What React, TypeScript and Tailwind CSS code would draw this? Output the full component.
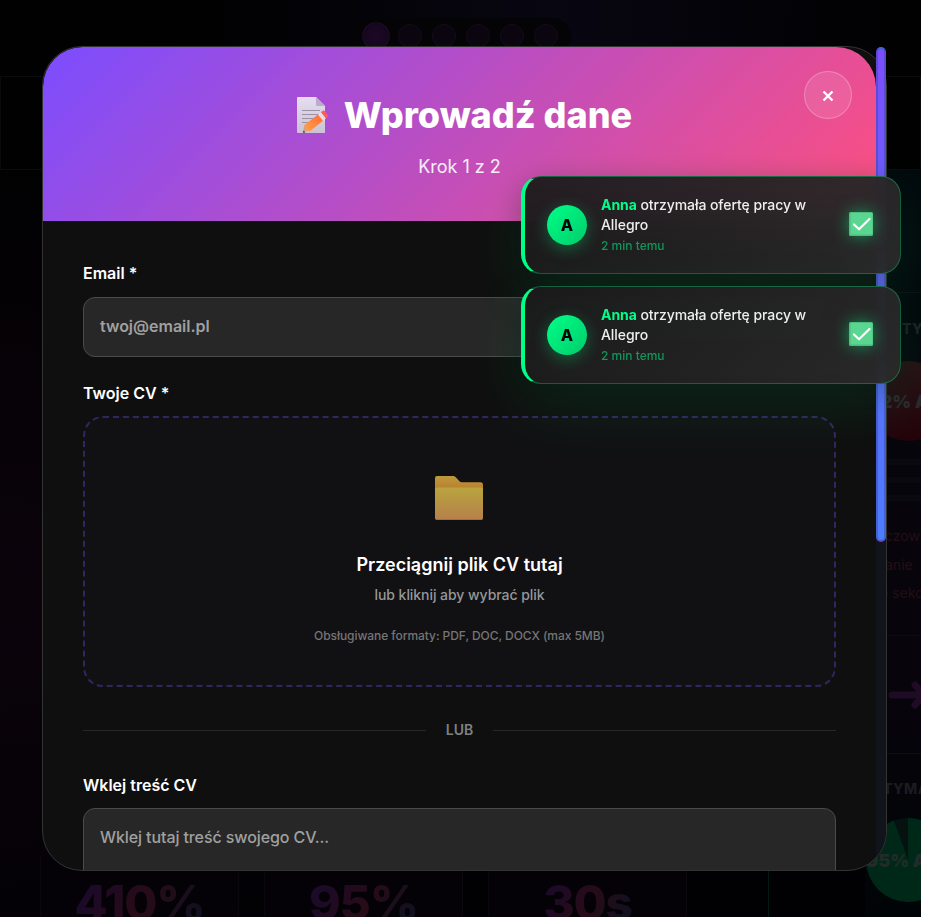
import React from 'react';

const stats = [
  { value: '410%' },
  { value: '95%' },
  { value: '30s' },
];

function MemoIcon() {
  return (
    <svg className="h-[38px] w-[34px] shrink-0" viewBox="0 0 34 38">
      <defs>
        <linearGradient id="paper" x1="0" y1="0" x2="0" y2="1">
          <stop offset="0" stopColor="#e5def0" />
          <stop offset="1" stopColor="#cbc3d5" />
        </linearGradient>
        <linearGradient id="pencil" x1="1" y1="0" x2="0" y2="1">
          <stop offset="0" stopColor="#ff6a36" />
          <stop offset="1" stopColor="#ffa34a" />
        </linearGradient>
      </defs>
      <path d="M2 1h18l9 9v27H2a1 1 0 0 1-1-1V2a1 1 0 0 1 1-1z" fill="url(#paper)" />
      <path d="M20 1l9 9h-8a1 1 0 0 1-1-1z" fill="#b9aeca" />
      <path d="M6 14.5h18M6 18.500h18M6 22.500h18M6 26.500h13" stroke="#9b91a4" strokeWidth="1.200" />
      <path d="M7 36.500l1.500-8 5.500 5.500z" fill="#d9a183" />
      <path d="M7 36.800l.6-2.300 1.700 2.100z" fill="#3c2740" />
      <path d="M8.500 29L22 18.500l5 6.200L13.500 35.500c-1-.2-1.500-.8-1.600-1.900-1.200-.1-1.800-.8-1.900-1.900-1-.3-1.600-1.200-1.500-2.700z" fill="url(#pencil)" />
      <path d="M22 18.500l3-2.300 5 6.200-3 2.300z" fill="#e7dce8" />
      <path d="M25 16.200l1.500-1.200c1-.7 1.700-.6 2.400.3l3 3.700c.6.8.5 1.500-.3 2.100L30 22.400z" fill="#ff5b52" />
    </svg>
  );
}

function FolderIcon() {
  return (
    <svg className="-ml-0.5 h-[46px] w-[50px]" viewBox="0 0 50 46">
      <defs>
        <linearGradient id="folderBack" x1="0" y1="0" x2="0" y2="1">
          <stop offset="0" stopColor="#bd9a3c" />
          <stop offset="0.600" stopColor="#b98231" />
        </linearGradient>
        <linearGradient id="folderFront" x1="0" y1="0" x2="0" y2="1">
          <stop offset="0" stopColor="#b9a43e" />
          <stop offset="1" stopColor="#b6804c" />
        </linearGradient>
      </defs>
      <path d="M3 1h16q1.500 0 2.500 1l4 4.300q.8.900 2 .900h19q2.500 0 2.500 2.500V20H1V3q0-2 2-2z" fill="url(#folderBack)" />
      <path d="M3 12.500h44q2 0 2 2V43q0 2-2 2H3q-2 0-2-2V14.500q0-2 2-2z" fill="url(#folderFront)" />
      <path d="M2 44.500h46" stroke="#b0654c" strokeWidth="1" />
    </svg>
  );
}

function CheckIcon() {
  return (
    <svg className="mb-0.5 h-6 w-6 shrink-0 drop-shadow-[0_0_8px_rgba(0,255,136,0.5)]" viewBox="0 0 24 24">
      <rect width="24" height="24" rx="1.500" fill="#4bbd7c" />
      <rect x="1.500" y="1" width="22" height="21.500" rx="1" fill="#5bd690" />
      <path d="M5 12.500l5 4.800L20.500 7" fill="none" stroke="#fff" strokeWidth="2.200" strokeLinecap="round" strokeLinejoin="round" />
    </svg>
  );
}

function Toast() {
  return (
    <div className="flex h-[98px] items-center rounded-[20px] border border-l-4 border-[rgba(0,255,136,0.3)] border-l-[#00ff88] bg-[linear-gradient(135deg,rgba(26,26,26,0.95),rgba(42,42,42,0.95))] pr-[27px] pl-[22px] shadow-[0_20px_60px_rgba(0,255,136,0.11),0_8px_32px_rgba(0,0,0,0.3)] backdrop-blur-[20px]">
      <div className="flex h-10 w-10 shrink-0 items-center justify-center rounded-full bg-[linear-gradient(135deg,#00ff88,#00cc6a)] text-[16px] font-extrabold text-black shadow-[0_4px_16px_rgba(0,255,136,0.3)]">
        A
      </div>
      <div className="ml-3.5 flex-1">
        <p className="text-[14px] leading-5 font-medium tracking-[-0.06px] text-[#eeeeee]">
          <strong className="font-bold text-[#00ff88]">Anna</strong> otrzymała ofertę pracy w<br />Allegro
        </p>
        <p className="pt-px text-[12px] leading-[19px] font-medium text-[#109759]">2 min temu</p>
      </div>
      <CheckIcon />
    </div>
  );
}

function Backdrop() {
  return (
    <div className="flex h-full flex-col overflow-hidden bg-[radial-gradient(ellipse_at_60%_0%,#080611_0%,transparent_45%),radial-gradient(circle_at_0%_65%,#0b030b_0%,transparent_40%),linear-gradient(#010102,#010104)]">
      <div className="flex h-[76px] shrink-0 justify-center pt-[18px]">
        <div className="flex h-9 items-center gap-2.5 rounded-full bg-[#040407] px-[13px]">
          <span className="h-6 w-6 scale-115 rounded-full border border-[#1d0d24] bg-[radial-gradient(circle,#1c0826,#12061a)]" />
          {[1, 2, 3, 4, 5].map((n) => (
            <span key={n} className="h-6 w-6 rounded-full border border-[#160b1b] bg-[#0b0510]" />
          ))}
        </div>
      </div>
      <div className="h-[94px] shrink-0 border border-[#0b0b0f]" />
      <div className="flex h-[747px] shrink-0 justify-end">
        <div className="flex w-[56px] flex-col overflow-hidden bg-[linear-gradient(#02090c,#07050c_40%,#07040b_70%,#010407)] whitespace-nowrap">
          <div className="h-[123px] shrink-0 border-b border-[#0c1116]" />
          <p className="mt-[26px] ml-[37px] text-[14px] leading-5 font-extrabold tracking-[0.5px] text-[#1c2224]">TYMASZ</p>
          <div className="mt-[22px] ml-[3px] flex h-20 w-20 shrink-0 items-center rounded-full bg-[linear-gradient(#270f13,#24030b)] text-[18px] font-black text-[#29292e]">
            42% A
          </div>
          <div className="mt-[18px] flex flex-col gap-[12px]">
            <div className="h-1.5 bg-[#0b0910]" />
            <div className="h-1.5 bg-[#0b0910]" />
            <div className="h-1.5 bg-[#0b0910]" />
          </div>
          <div className="mt-[21px] h-[114px] shrink-0 border-b border-[#100a12] text-[14px] leading-[28.500px] text-[#260d14]">
            <p className="ml-[20px]">czowych</p>
            <p className="ml-[20px]">anie</p>
            <p className="ml-[15px]">e sekcje</p>
          </div>
          <div className="flex h-[118px] shrink-0 items-center border-b border-[#071118] pl-[20px]">
            <svg className="h-[30px] w-[37px] shrink-0" viewBox="0 0 37 30">
              <path d="M7 15h29M30 5l9 10-9 10" stroke="#200b24" strokeWidth="7" strokeLinecap="round" strokeLinejoin="round" fill="none" />
            </svg>
          </div>
          <p className="mt-[25px] ml-[18px] text-[14px] leading-5 font-extrabold tracking-[0.5px] text-[#1b1b20]">TYMASZ</p>
          <div className="mt-[19px] ml-px flex h-[84px] w-[84px] shrink-0 items-center rounded-full bg-[conic-gradient(#002818_0_94.500%,#06120f_94.500%)] text-[18px] font-black text-[#202c29]">
            95% A
          </div>
        </div>
      </div>
      <div className="-mt-[61px] flex h-[62px] shrink-0 gap-[25px] pl-10">
        {stats.map((stat) => (
          <div key={stat.value} className="flex w-[199px] justify-center border-x border-[#0a080c] bg-[#040206]">
            <span className="mt-[17px] h-12 bg-[linear-gradient(120deg,#1b0a28_15%,#280b17_55%,#12101f_90%)] bg-clip-text text-[48px] leading-[60px] font-extrabold tracking-[-1.200px] text-transparent">
              {stat.value}
            </span>
          </div>
        ))}
        <div className="ml-[56px] w-px bg-[#001b14]" />
      </div>
    </div>
  );
}

function Modal() {
  return (
    <div className="flex h-[825px] w-[845px] overflow-hidden rounded-[40px] border border-[#333333] bg-[#0f0f0f]">
      <div className="w-[833px] shrink-0">
        <header className="relative flex h-[174px] flex-col items-center rounded-t-[40px] bg-[linear-gradient(135deg,#7c4dff,#ff4f7e)] pt-[40px]">
          <h1 className="flex h-[56px] items-center gap-[14px] pl-[9px] text-[36px] leading-[56px] font-extrabold text-white">
            <MemoIcon />
            Wprowadź dane
          </h1>
          <p className="mt-[10px] text-[18px] leading-7 text-white/90">Krok 1 z 2</p>
          <button className="absolute top-6 right-6 flex h-12 w-12 items-center justify-center rounded-full border border-white/25 bg-white/10 pt-0.5 pr-px text-white">
            <svg className="h-3 w-3" viewBox="0 0 12 12">
              <path d="M1.500 1.500l9 9m0-9l-9 9" stroke="currentColor" strokeWidth="2.400" />
            </svg>
          </button>
        </header>
        <div className="px-10 pt-10">
          <label className="block text-[16px] leading-6 font-semibold text-white">Email *</label>
          <div className="mt-3 flex h-[60px] items-center rounded-xl border border-[#4b4b4b] bg-[#272727] px-4 pb-0.5 text-[16px] font-semibold text-[#a0a0a0]">
            twoj@email.pl
          </div>
          <label className="mt-6 block text-[16px] leading-6 font-semibold text-white">Twoje CV *</label>
          <div className="mt-[11px] flex h-[271px] flex-col items-center rounded-[20px] border-2 border-dashed border-[#31265f] bg-[#111113] pt-[57px]">
            <FolderIcon />
            <p className="mt-[30px] text-[18px] leading-7 font-semibold text-white">Przeciągnij plik CV tutaj</p>
            <p className="mt-[4px] text-[14px] leading-6 font-medium tracking-[-0.05px] text-[#979798]">lub kliknij aby wybrać plik</p>
            <p className="mt-[19px] text-[12px] leading-5 font-medium tracking-[-0.06px] text-[#757576]">Obsługiwane formaty: PDF, DOC, DOCX (max 5MB)</p>
          </div>
          <div className="mt-8 flex items-center gap-5">
            <div className="h-px flex-1 bg-[#272727]" />
            <span className="text-[14px] leading-[22px] font-semibold text-[#808080]">LUB</span>
            <div className="h-px flex-1 bg-[#272727]" />
          </div>
          <label className="mt-8 block text-[16px] leading-6 font-semibold text-white">Wklej treść CV</label>
          <div className="mt-[11px] h-[200px] rounded-xl border border-[#4b4b4b] bg-[#272727] px-4 pt-[15px] text-[16px] leading-[26px] font-medium tracking-[-0.1px] text-[#a0a0a0]">
            Wklej tutaj treść swojego CV...
          </div>
        </div>
      </div>
      <div className="w-[10px] shrink-0 bg-[#11141b]" />
    </div>
  );
}

export default function App() {
  return (
    <div className="h-[917px] w-[929px] overflow-hidden bg-white font-['Inter',sans-serif]">
      <div className="relative h-full w-[921px] overflow-hidden">
        <Backdrop />
        <div className="absolute top-[46px] left-[42px]">
          <Modal />
          <div className="absolute top-px right-px h-[495px] w-[10px] rounded-[5px] border-2 border-[rgba(50,70,150,0.45)] bg-[linear-gradient(#7c4dff,#4d7cff)]" />
        </div>
        <div className="absolute top-[176px] right-5 flex w-[380px] flex-col gap-3">
          <Toast />
          <Toast />
        </div>
      </div>
    </div>
  );
}
